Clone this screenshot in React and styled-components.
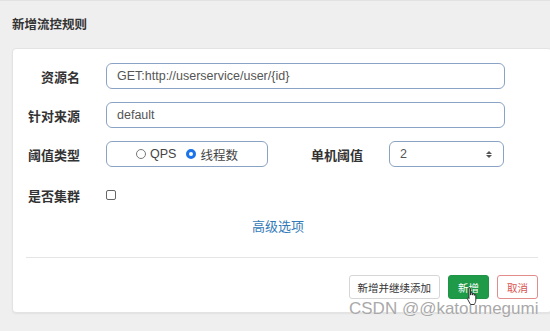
import styled, { createGlobalStyle } from "styled-components";

const Global = createGlobalStyle`
  html, body {
    margin: 0;
    padding: 0;
    background: #efefef;
    overflow: hidden;
  }
  body {
    font-family: "Liberation Sans", "Noto Sans CJK SC", sans-serif;
    color: #333;
  }
`;

const Page = styled.div`
  position: relative;
  width: 550px;
  height: 331px;
  border-top: 1px solid #e2e2e2;
  box-sizing: border-box;
  padding: 0 0 0 12px;
  overflow: hidden;
`;

const Title = styled.h4`
  margin: 0;
  height: 47px;
  display: flex;
  align-items: center;
  font-size: 12.5px;
  font-weight: bold;
  color: #333;
  padding-bottom: 2px;
  box-sizing: border-box;
`;

const Card = styled.div`
  width: 540px;
  background: #fff;
  border: 1px solid #e3e3e3;
  border-radius: 4px;
  box-sizing: border-box;
  box-shadow: 0 1px 2px rgba(0, 0, 0, 0.06);
`;

const Body = styled.div`
  padding: 14px 0 0 0;
  display: flex;
  flex-direction: column;
  gap: 13px;
`;

const Row = styled.div`
  display: flex;
  align-items: center;
  height: 26px;
  margin-top: ${(p) => p.$mt || 0}px;
`;

const Label = styled.label`
  width: ${(p) => p.$w || 67}px;
  text-align: right;
  font-size: 13px;
  font-weight: bold;
  color: #333;
  margin-right: 26px;
  flex-shrink: 0;
`;

const Input = styled.div`
  width: ${(p) => p.$w}px;
  height: 26px;
  box-sizing: border-box;
  border: 1px solid #8aa3c4;
  border-radius: 6px;
  display: flex;
  align-items: center;
  justify-content: ${(p) => (p.$center ? "center" : "space-between")};
  padding: 0 10px;
  font-size: 12.5px;
  color: #555;
  gap: 10px;
  flex-shrink: 0;
`;

const Radio = styled.span`
  width: 10px;
  height: 10px;
  border-radius: 50%;
  box-sizing: border-box;
  border: ${(p) => (p.$on ? "3px solid #1a73e8" : "1px solid #777")};
  background: #fff;
  display: inline-block;
  margin-right: 4px;
`;

const RadioItem = styled.span`
  display: inline-flex;
  align-items: center;
  font-size: 12.5px;
  color: #444;
`;

const Spin = styled.span`
  display: flex;
  flex-direction: column;
  align-items: center;
  gap: 1px;
  width: 8px;
  & i {
    width: 0;
    height: 0;
    border-left: 3px solid transparent;
    border-right: 3px solid transparent;
  }
  & i:first-child {
    border-bottom: 3px solid #555;
  }
  & i:last-child {
    border-top: 3px solid #555;
  }
`;

const Check = styled.span`
  width: 10px;
  height: 10px;
  border: 1px solid #666;
  border-radius: 2px;
  box-sizing: border-box;
  display: inline-block;
`;

const Advanced = styled.div`
  text-align: center;
  color: #337ab7;
  font-size: 13px;
  line-height: 19px;
  margin-top: -4px;
  padding-right: 8px;
`;

const Footer = styled.div`
  margin: 21px 13px 0 13px;
  border-top: 1px solid #e5e5e5;
  display: flex;
  justify-content: flex-end;
  gap: 8px;
  padding: 17px 0 13px;
`;

const Button = styled.button`
  height: 24px;
  padding: 0 ${(p) => p.$px || 9}px;
  font-family: "Liberation Sans", "Noto Sans CJK SC", sans-serif;
  font-size: 10.5px;
  border-radius: 3px;
  border: 1px solid ${(p) => p.$border};
  background: ${(p) => p.$bg};
  color: ${(p) => p.$color};
  cursor: pointer;
`;

const Watermark = styled.div`
  position: absolute;
  left: 349px;
  top: 298px;
  white-space: nowrap;
  font-family: "Liberation Sans", sans-serif;
  font-size: 17px;
  color: #a9a9a9;
  text-shadow: 0 0 1px #fff;
`;

const Cursor = styled.svg`
  position: absolute;
  left: 465px;
  top: 286px;
`;

export default function App() {
  return (
    <>
      <Global />
      <Page>
        <Title>新增流控规则</Title>
        <Card>
          <Body>
            <Row>
              <Label>资源名</Label>
              <Input $w={399}>GET:http://userservice/user/{"{id}"}</Input>
            </Row>
            <Row>
              <Label>针对来源</Label>
              <Input $w={399}>default</Input>
            </Row>
            <Row>
              <Label>阈值类型</Label>
              <Input $w={162} $center>
                <RadioItem>
                  <Radio />
                  QPS
                </RadioItem>
                <RadioItem>
                  <Radio $on />
                  线程数
                </RadioItem>
              </Input>
              <Label $w={95}>单机阈值</Label>
              <Input $w={115}>
                2
                <Spin>
                  <i />
                  <i />
                </Spin>
              </Input>
            </Row>
            <Row $mt={2}>
              <Label>是否集群</Label>
              <Check />
            </Row>
            <Advanced>高级选项</Advanced>
          </Body>
          <Footer>
            <Button $border="#d6d6d6" $bg="#fff" $color="#333" $px={8}>
              新增并继续添加
            </Button>
            <Button $border="#1f9447" $bg="#1f9a48" $color="#fff">
              新增
            </Button>
            <Button $border="#e38c8c" $bg="#fff" $color="#d9534f">
              取消
            </Button>
          </Footer>
        </Card>
        <Watermark>CSDN @@katoumegumi</Watermark>
        <Cursor width="14" height="20" viewBox="0 0 14 20">
          <path
            d="M4 1.5c0-.8 1.5-.8 1.5 0V8h.3V6.3c0-.8 1.5-.8 1.5 0V8h.3V7c0-.8 1.5-.8 1.5 0v1.3h.3V8c0-.8 1.4-.8 1.4 0v5c0 2-1 3.5-1.5 4.5H5.5L2.5 12c-.6-1 .6-1.8 1.2-1L4 11.6z"
            fill="#fff"
            stroke="#222"
            strokeWidth="0.9"
            strokeLinejoin="round"
          />
        </Cursor>
      </Page>
    </>
  );
}
